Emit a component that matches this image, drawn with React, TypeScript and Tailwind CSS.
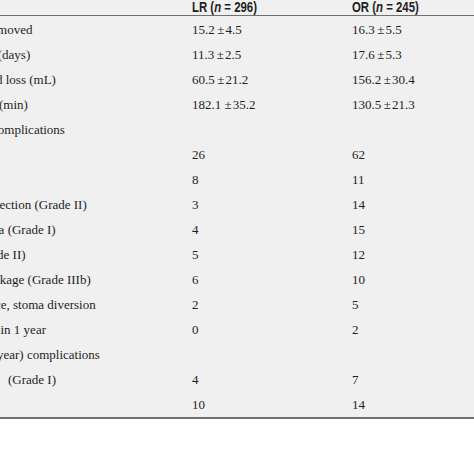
const rows: { label: string; shift: number; lr: string; or: string }[] = [
  { label: "removed", shift: -13, lr: "15.2\u2009±\u200a4.5", or: "16.3\u2009±\u200a5.5" },
  { label: "y (days)", shift: -12, lr: "11.3\u2009±\u200a2.5", or: "17.6\u2009±\u200a5.3" },
  { label: "d loss (mL)", shift: -4, lr: "60.5\u2009±\u200a21.2", or: "156.2\u2009±\u200a30.4" },
  { label: "e (min)", shift: -10, lr: "182.1 ±\u200a35.2", or: "130.5\u2009±\u200a21.3" },
  { label: "complications", shift: -8, lr: "", or: "" },
  { label: "", shift: 0, lr: "26", or: "62" },
  { label: "", shift: 0, lr: "8", or: "11" },
  { label: "infection (Grade II)", shift: -15, lr: "3", or: "14" },
  { label: "ia (Grade I)", shift: -5, lr: "4", or: "15" },
  { label: "rade II)", shift: -13, lr: "5", or: "12" },
  { label: "akage (Grade IIIb)", shift: -6, lr: "6", or: "10" },
  { label: "ce, stoma diversion", shift: -5, lr: "2", or: "5" },
  { label: "hin 1 year", shift: -6, lr: "0", or: "2" },
  { label: "year) complications", shift: -3, lr: "", or: "" },
  { label: "(Grade I)", shift: 8, lr: "4", or: "7" },
  { label: "", shift: 0, lr: "10", or: "14" },
];

export default function App() {
  return (
    <div className="w-[474px] h-[474px] bg-white overflow-hidden">
      <div className="bg-[#eff0ef] text-[#1f1f1f]">
        <div
          className="flex h-[16px] items-end text-[15px] font-bold leading-[15px] border-b-[1.5px] border-[#707070]"
          style={{ fontFamily: '"Liberation Sans", Arial, sans-serif' }}
        >
          <div className="w-[192px]" />
          <div className="w-[160px] whitespace-nowrap">
            <span className="inline-block pb-[1px] scale-x-[0.76] origin-left">
              LR (<i>n</i> = 296)
            </span>
          </div>
          <div className="whitespace-nowrap">
            <span className="inline-block pb-[1px] scale-x-[0.76] origin-left">
              OR (<i>n</i> = 245)
            </span>
          </div>
        </div>
        <div
          className="pt-[1px] text-[13px]"
          style={{ fontFamily: '"Liberation Serif", "Times New Roman", serif' }}
        >
          {rows.map((r, i) => (
            <div key={i} className="flex h-[25px] items-center">
              <div className="w-[192px] overflow-hidden whitespace-nowrap">
                <span className="inline-block" style={{ marginLeft: r.shift }}>
                  {r.label}
                </span>
              </div>
              <div className="w-[160px]">{r.lr}</div>
              <div>{r.or}</div>
            </div>
          ))}
        </div>
      </div>
      <div className="h-[2px] bg-[#707070]" />
    </div>
  );
}
